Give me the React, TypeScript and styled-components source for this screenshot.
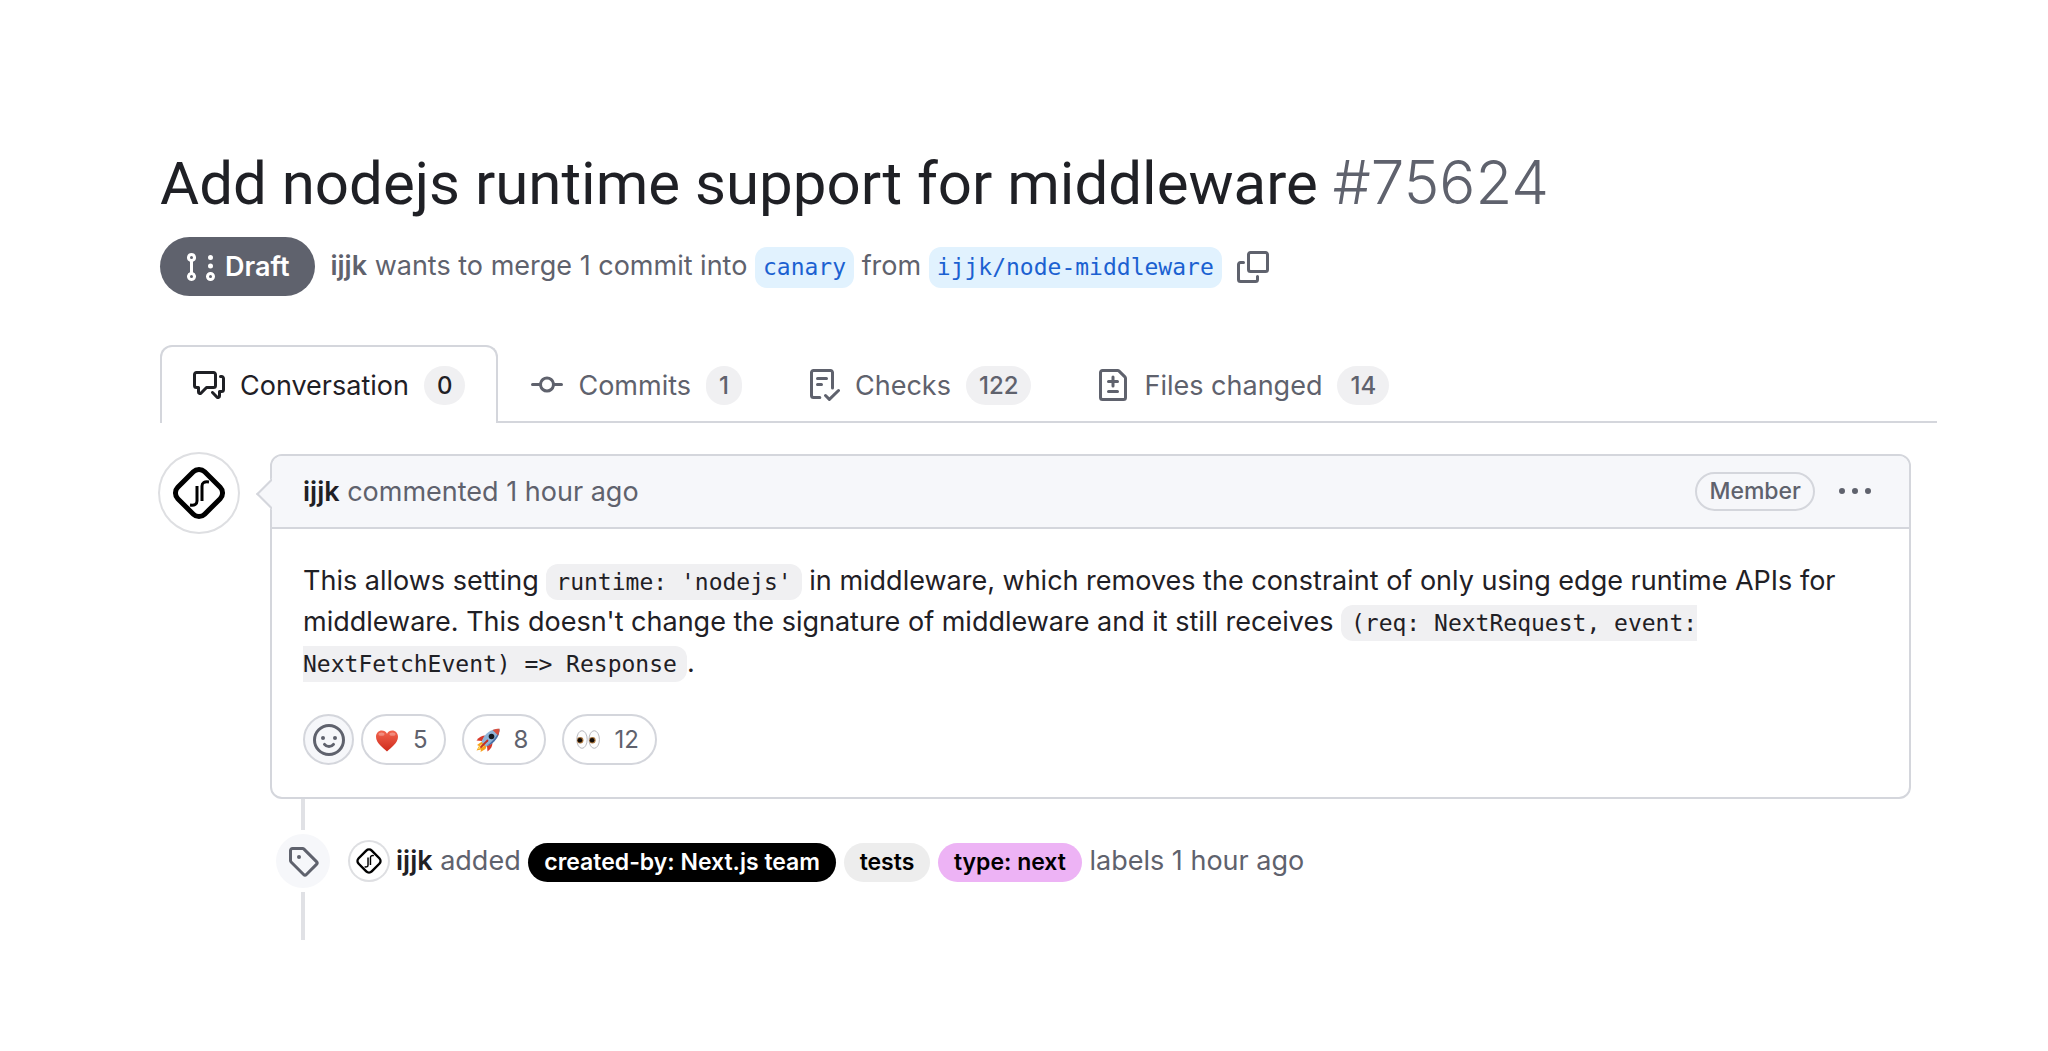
import type {ReactNode} from "react";
import styled, {createGlobalStyle} from "styled-components";

const theme = {
    colors: {
        text: "#1f2025",
        muted: "#5f626d",
        link: "#1b61d1",
        linkBg: "#e1f2fe",
        border: "#d4d6dc",
        subtle: "#f6f7fa",
        neutral: "#f0f0f2",
    },
    fonts: {
        sans: "Inter, 'Liberation Sans', sans-serif",
        title: "Roboto, 'Liberation Sans', sans-serif",
        mono: "'DejaVu Sans Mono', 'Liberation Mono', monospace",
    },
}

const icons = {
    draft: "M3.25 1A2.25 2.25 0 0 1 4 5.372v5.256a2.251 2.251 0 1 1-1.5 0V5.372A2.251 2.251 0 0 1 3.25 1Zm9.5 14a2.25 2.25 0 1 1 0-4.5 2.25 2.25 0 0 1 0 4.5ZM2.5 3.25a.75.75 0 1 0 1.5 0 .75.75 0 0 0-1.5 0ZM3.25 12a.75.75 0 1 0 0 1.5.75.75 0 0 0 0-1.5Zm9.5 0a.75.75 0 1 0 0 1.5.75.75 0 0 0 0-1.5ZM14 7.5a1.25 1.25 0 1 1-2.5 0 1.25 1.25 0 0 1 2.5 0Zm0-4.25a1.25 1.25 0 1 1-2.5 0 1.25 1.25 0 0 1 2.5 0Z",
    copy: "M0 6.75C0 5.784.784 5 1.75 5h1.5a.75.75 0 0 1 0 1.5h-1.5a.25.25 0 0 0-.25.25v7.5c0 .138.112.25.25.25h7.5a.25.25 0 0 0 .25-.25v-1.5a.75.75 0 0 1 1.5 0v1.5A1.75 1.75 0 0 1 9.25 16h-7.5A1.75 1.75 0 0 1 0 14.25ZM5 1.75C5 .784 5.784 0 6.75 0h7.5C15.216 0 16 .784 16 1.75v7.5A1.75 1.75 0 0 1 14.25 11h-7.5A1.75 1.75 0 0 1 5 9.25Zm1.75-.25a.25.25 0 0 0-.25.25v7.5c0 .138.112.25.25.25h7.5a.25.25 0 0 0 .25-.25v-7.5a.25.25 0 0 0-.25-.25Z",
    discussion: "M1.75 1h8.5c.966 0 1.75.784 1.75 1.75v5.5A1.75 1.75 0 0 1 10.25 10H7.061l-2.574 2.573A1.458 1.458 0 0 1 2 11.543V10h-.25A1.75 1.75 0 0 1 0 8.25v-5.5C0 1.784.784 1 1.75 1ZM1.5 2.75v5.5c0 .138.112.25.25.25h1a.75.75 0 0 1 .75.75v2.19l2.72-2.72a.749.749 0 0 1 .53-.22h3.5a.25.25 0 0 0 .25-.25v-5.5a.25.25 0 0 0-.25-.25h-8.5a.25.25 0 0 0-.25.25Zm13 2a.25.25 0 0 0-.25-.25h-.5a.75.75 0 0 1 0-1.5h.5c.966 0 1.75.784 1.75 1.75v5.5A1.75 1.75 0 0 1 14.25 12H14v1.543a1.458 1.458 0 0 1-2.487 1.03L9.22 12.28a.749.749 0 0 1 .326-1.275.749.749 0 0 1 .734.215l2.22 2.22v-2.19a.75.75 0 0 1 .75-.75h1a.25.25 0 0 0 .25-.25Z",
    commit: "M11.93 8.5a4.002 4.002 0 0 1-7.86 0H.75a.75.75 0 0 1 0-1.5h3.32a4.002 4.002 0 0 1 7.86 0h3.32a.75.75 0 0 1 0 1.5Zm-1.43-.75a2.5 2.5 0 1 0-5 0 2.5 2.5 0 0 0 5 0Z",
    checklist: "M2.5 1.75v11.5c0 .138.112.25.25.25h3.17a.75.75 0 0 1 0 1.5H2.75A1.75 1.75 0 0 1 1 13.25V1.75C1 .784 1.784 0 2.75 0h8.5C12.216 0 13 .784 13 1.75v7.736a.75.75 0 0 1-1.5 0V1.75a.25.25 0 0 0-.25-.25h-8.5a.25.25 0 0 0-.25.25Zm13.274 9.537v-.001l-4.557 4.45a.75.75 0 0 1-1.055-.008l-1.943-1.95a.75.75 0 0 1 1.062-1.058l1.419 1.425 4.026-3.932a.75.75 0 1 1 1.048 1.074ZM4.75 4h4.5a.75.75 0 0 1 0 1.5h-4.5a.75.75 0 0 1 0-1.5ZM4 7.75A.75.75 0 0 1 4.75 7h2a.75.75 0 0 1 0 1.5h-2A.75.75 0 0 1 4 7.75Z",
    diff: "M1 1.75C1 .784 1.784 0 2.75 0h7.586c.464 0 .909.184 1.237.513l2.914 2.914c.329.328.513.773.513 1.237v9.586A1.75 1.75 0 0 1 13.25 16H2.75A1.75 1.75 0 0 1 1 14.25Zm1.75-.25a.25.25 0 0 0-.25.25v12.5c0 .138.112.25.25.25h10.5a.25.25 0 0 0 .25-.25V4.664a.25.25 0 0 0-.073-.177l-2.914-2.914a.25.25 0 0 0-.177-.073ZM8 3.25a.75.75 0 0 1 .75.75v1.5h1.5a.75.75 0 0 1 0 1.5h-1.5v1.5a.75.75 0 0 1-1.5 0V7h-1.5a.75.75 0 0 1 0-1.5h1.5V4A.75.75 0 0 1 8 3.25Zm-3 8a.75.75 0 0 1 .75-.75h4.5a.75.75 0 0 1 0 1.5h-4.5a.75.75 0 0 1-.75-.75Z",
    kebab: "M8 9a1.5 1.5 0 1 0 0-3 1.5 1.5 0 0 0 0 3ZM1.5 9a1.5 1.5 0 1 0 0-3 1.5 1.5 0 0 0 0 3Zm13 0a1.5 1.5 0 1 0 0-3 1.5 1.5 0 0 0 0 3Z",
    tag: "M1 7.775V2.75C1 1.784 1.784 1 2.75 1h5.025c.464 0 .91.184 1.238.513l6.25 6.25a1.75 1.75 0 0 1 0 2.474l-5.026 5.026a1.75 1.75 0 0 1-2.474 0l-6.25-6.25A1.752 1.752 0 0 1 1 7.775Zm1.5 0c0 .066.026.13.073.177l6.25 6.25a.25.25 0 0 0 .354 0l5.025-5.025a.25.25 0 0 0 0-.354l-6.25-6.25a.25.25 0 0 0-.177-.073H2.75a.25.25 0 0 0-.25.25ZM6 5a1 1 0 1 1 0 2 1 1 0 0 1 0-2Z",
}

const Icon = ({name}: { name: keyof typeof icons }) => (
    <StyledIcon viewBox="0 0 16 16" aria-hidden="true">
        <path d={icons[name]} fill="currentColor"/>
    </StyledIcon>
)

const Smiley = () => (
    <StyledIcon viewBox="0 0 16 16" aria-hidden="true" fill="none" stroke="currentColor" strokeWidth="1.5">
        <circle cx="8" cy="8" r="7.25"/>
        <path d="M5.75 10.2c1.1 1.4 3.4 1.4 4.5 0" strokeLinecap="round"/>
        <circle cx="5" cy="7" r="1" fill="currentColor" stroke="none"/>
        <circle cx="11" cy="7" r="1" fill="currentColor" stroke="none"/>
    </StyledIcon>
)

const Logo = () => (
    <svg viewBox="0 0 78 78" width="100%" height="100%" aria-hidden="true" fill="none" stroke="#000">
        <rect x="20" y="20" width="38" height="38" rx="8" strokeWidth="5" transform="rotate(45 39 39)"/>
        <path d="M37 32v15q0 5-7 4" strokeWidth="3"/>
        <path d="M42 47V32q0-5 7-4" strokeWidth="3"/>
    </svg>
)

const Heart = () => (
    <svg viewBox="0 0 24 24" width="24" height="24" aria-hidden="true">
        <defs>
            <linearGradient id="heart" x1="0" y1="0" x2="0" y2="1">
                <stop offset="0" stopColor="#f2654f"/>
                <stop offset="1" stopColor="#cf2a1b"/>
            </linearGradient>
        </defs>
        <path d="M12 23.500C8 19.500 1 15 1 8.700 1 5.100 3.600 2.500 6.800 2.500 9 2.500 11 3.700 12 5.700 13 3.700 15 2.500 17.200 2.500 20.400 2.500 23 5.100 23 8.700 23 15 16 19.500 12 23.500Z" fill="url(#heart)"/>
        <ellipse cx="6.500" cy="6.200" rx="3" ry="1.600" fill="#fff" opacity=".3"/>
        <ellipse cx="17.500" cy="6.200" rx="3" ry="1.600" fill="#fff" opacity=".3"/>
    </svg>
)

const Rocket = () => (
    <svg viewBox="0 0 24 24" width="24" height="24" aria-hidden="true">
        <path d="M6 13.500 1 17l2 1-2.500 4.500L5 21.500 4.500 24l5-3 1.500-4Z" fill="#f7a21b"/>
        <path d="M5 16l-3.500 5.500L8 18.500Z" fill="#fde36b"/>
        <path d="M9.500 7.500C6 7.500 3 9 .5 12.500l5.500.5Z" fill="#d83a2b"/>
        <path d="M16.500 14.500c0 3.500-1.500 6.500-5 9L11 18Z" fill="#d83a2b"/>
        <path d="M23.500.8C17 .8 11.500 3.500 7.500 9.500L5.500 14l4.500 4.500 4.500-2C20.500 12.500 23.500 7 23.500.8Z" fill="#8fb4d8"/>
        <path d="M23.500.8C22 7 18 12.500 10 18.500l4.500-2C20.500 12.500 23.500 7 23.500.8Z" fill="#4a6fa5"/>
        <path d="M23.500.8c-2.500 0-4.800.4-7 1.300l5.700 5.500c.9-2.200 1.300-4.400 1.300-6.800Z" fill="#d9503f"/>
        <circle cx="15.500" cy="8.500" r="2.800" fill="#15181f"/>
        <path d="M11.500 12.500 5 19" stroke="#c22f24" strokeWidth="1.800" strokeLinecap="round"/>
    </svg>
)

const Eyes = () => (
    <svg viewBox="0 0 24 24" width="24" height="24" aria-hidden="true">
        <ellipse cx="6" cy="11.500" rx="5.200" ry="8.800" fill="#fdfdfd" stroke="#b9b9bf" strokeWidth="1"/>
        <ellipse cx="18.200" cy="11.500" rx="5.200" ry="8.800" fill="#fdfdfd" stroke="#b9b9bf" strokeWidth="1"/>
        <circle cx="4.200" cy="12.200" r="3.200" fill="#a9743c"/>
        <circle cx="16.400" cy="12.200" r="3.200" fill="#a9743c"/>
        <circle cx="3.900" cy="12.200" r="2.300" fill="#120c08"/>
        <circle cx="16.100" cy="12.200" r="2.300" fill="#120c08"/>
    </svg>
)

const tabs: { icon: keyof typeof icons, title: string, count: number }[] = [
    {icon: "discussion", title: "Conversation", count: 0},
    {icon: "commit", title: "Commits", count: 1},
    {icon: "checklist", title: "Checks", count: 122},
    {icon: "diff", title: "Files changed", count: 14},
]

const reactions: { name: string, icon: ReactNode, count: number }[] = [
    {name: "heart", icon: <Heart/>, count: 5},
    {name: "rocket", icon: <Rocket/>, count: 8},
    {name: "eyes", icon: <Eyes/>, count: 12},
]

const App = () => {
    return (
        <Page>
            <GlobalStyle/>
            <header>
                <Title>Add nodejs runtime support for middleware <span>#75624</span></Title>
                <Meta>
                    <State><Icon name="draft"/>Draft</State>
                    <MetaText>
                        <Author href="#ijjk" $muted>ijjk</Author> wants to merge 1 commit into{" "}
                        <Branch href="#canary">canary</Branch> from{" "}
                        <Branch href="#node-middleware">ijjk/node-middleware</Branch>
                    </MetaText>
                    <IconButton type="button" aria-label="Copy"><Icon name="copy"/></IconButton>
                </Meta>
            </header>

            <Tabs>
                {tabs.map((t, index) => (
                    <Tab key={t.title} href={"#" + t.icon} $active={index === 0}>
                        <Icon name={t.icon}/>
                        {t.title}
                        <Counter>{t.count}</Counter>
                    </Tab>
                ))}
            </Tabs>

            <Thread>
                <Avatar href="#ijjk" aria-label="ijjk" $size={78}><Logo/></Avatar>
                <div>
                    <Comment>
                        <CommentHeader>
                            <div><Author href="#ijjk">ijjk</Author> commented 1 hour ago</div>
                            <Actions>
                                <Role>Member</Role>
                                <IconButton type="button" aria-label="Show options"><Icon name="kebab"/></IconButton>
                            </Actions>
                        </CommentHeader>
                        <CommentBody>
                            <Text>
                                This allows setting <Code>runtime: 'nodejs'</Code> in middleware, which removes the
                                constraint of only using edge runtime APIs for middleware. This doesn't change the
                                signature of middleware and it still
                                receives <Code>(req: NextRequest, event: NextFetchEvent) =&gt; Response</Code>.
                            </Text>
                            <Reactions>
                                <AddReaction type="button" aria-label="Add reaction"><Smiley/></AddReaction>
                                {reactions.map(r => (
                                    <Reaction key={r.name} type="button" aria-label={r.name}>
                                        {r.icon}
                                        <span>{r.count}</span>
                                    </Reaction>
                                ))}
                            </Reactions>
                        </CommentBody>
                    </Comment>

                    <Event>
                        <Rail>
                            <Line $height={31}/>
                            <Badge><Icon name="tag"/></Badge>
                            <Line $height={48}/>
                        </Rail>
                        <EventText>
                            <Avatar href="#ijjk" aria-label="ijjk" $size={38}><Logo/></Avatar>
                            <p>
                                <Author href="#ijjk">ijjk</Author> added{" "}
                                <Label href="#nextjs" $bg="#000" $color="#fff">created-by: Next.js team</Label>{" "}
                                <Label href="#tests" $bg="#ededed" $color="#000">tests</Label>{" "}
                                <Label href="#next" $bg="#edb3f5" $color="#000">type: next</Label> labels 1 hour ago
                            </p>
                        </EventText>
                    </Event>
                </div>
            </Thread>
        </Page>
    );
};

export default App;

const GlobalStyle = createGlobalStyle`
    * {
        box-sizing: border-box;
    }

    body {
        margin: 0;
        background-color: #fff;
        color: ${theme.colors.text};
        font-family: ${theme.fonts.sans};
        font-size: 27px;
        line-height: 41px;
    }

    p, h1 {
        margin: 0;
    }

    a {
        color: inherit;
        text-decoration: none;
    }

    button {
        font: inherit;
        color: inherit;
        cursor: pointer;
    }
`

const Page = styled.main`
    padding: 145px 111px 100px 160px;
`

const StyledIcon = styled.svg`
    width: 32px;
    height: 32px;
    flex-shrink: 0;
`

const Title = styled.h1`
    font-family: ${theme.fonts.title};
    font-size: 60px;
    line-height: 78px;
    font-weight: 400;

    span {
        font-family: ${theme.fonts.sans};
        font-weight: 300;
        line-height: 1;
        color: ${theme.colors.muted};
    }
`

const Meta = styled.div`
    display: flex;
    align-items: center;
    gap: 15px;
    margin-top: 14px;
    color: ${theme.colors.muted};
`

const State = styled.span`
    display: flex;
    align-items: center;
    gap: 8px;
    padding: 9px 26px 9px 25px;
    border-radius: 30px;
    background-color: ${theme.colors.muted};
    color: #fff;
    font-weight: 600;
`

const MetaText = styled.div`
    color: ${theme.colors.muted};
`

const Author = styled.a<{ $muted?: boolean }>`
    font-weight: 600;
    color: ${props => props.$muted ? theme.colors.muted : theme.colors.text};
`

const Branch = styled.a`
    display: inline-block;
    padding: 0 8px;
    border-radius: 12px;
    background-color: ${theme.colors.linkBg};
    color: ${theme.colors.link};
    font-family: ${theme.fonts.mono};
    font-size: 23px;
`

const IconButton = styled.button`
    display: flex;
    padding: 0;
    border: none;
    background: none;
    color: ${theme.colors.muted};
`

const Tabs = styled.nav`
    display: flex;
    margin-top: 49px;
    box-shadow: inset 0 -2px ${theme.colors.border};
`

const Tab = styled.a<{ $active: boolean }>`
    display: flex;
    align-items: center;
    gap: 15px;
    height: 78px;
    padding: 0 31px;
    border: 2px solid ${props => props.$active ? theme.colors.border : "transparent"};
    border-bottom: none;
    border-radius: 12px 12px 0 0;
    background-color: ${props => props.$active ? "#fff" : "transparent"};
    color: ${props => props.$active ? theme.colors.text : theme.colors.muted};
`

const Counter = styled.span`
    padding: 0 13px;
    border-radius: 20px;
    background-color: ${theme.colors.neutral};
    font-size: 24px;
    line-height: 39px;
    font-weight: 500;
`

const Thread = styled.section`
    display: grid;
    grid-template-columns: 78px 1fr;
    gap: 32px;
    align-items: start;
    margin-top: 31px;
    padding-right: 26px;
`

const Avatar = styled.a<{ $size: number }>`
    display: block;
    flex-shrink: 0;
    width: ${props => props.$size}px;
    height: ${props => props.$size}px;
    border-radius: 50%;
    box-shadow: 0 0 0 2px #dedfe2;
`

const Comment = styled.article`
    position: relative;
    border: 2px solid ${theme.colors.border};
    border-radius: 12px;

    /* arrow that points at the avatar */
    &::before {
        content: "";
        position: absolute;
        top: 26px;
        left: -11px;
        width: 22px;
        height: 22px;
        border: 2px solid ${theme.colors.border};
        border-width: 0 0 2px 2px;
        background-color: ${theme.colors.subtle};
        transform: rotate(45deg);
    }
`

const CommentHeader = styled.div`
    position: relative;
    display: flex;
    align-items: center;
    justify-content: space-between;
    padding: 15px 38px 15px 31px;
    border-bottom: 2px solid ${theme.colors.border};
    border-radius: 10px 10px 0 0;
    background-color: ${theme.colors.subtle};
    color: ${theme.colors.muted};
`

const Actions = styled.div`
    display: flex;
    align-items: center;
    gap: 24px;
`

const Role = styled.span`
    padding: 0 12px;
    border: 2px solid ${theme.colors.border};
    border-radius: 20px;
    font-size: 23px;
    line-height: 35px;
    font-weight: 500;
`

const CommentBody = styled.div`
    padding: 31px 31px 32px;
`

const Text = styled.p`
    margin-bottom: 31px;
`

const Code = styled.code`
    padding: 5px 10px;
    border-radius: 12px;
    background-color: ${theme.colors.neutral};
    font-family: ${theme.fonts.mono};
    font-size: 23px;
    line-height: 1;
`

const Reactions = styled.div`
    display: flex;
    gap: 16px;
`

const Reaction = styled.button`
    display: flex;
    align-items: center;
    gap: 14px;
    height: 51px;
    padding: 0 16px 0 12px;
    border: 2px solid ${theme.colors.border};
    border-radius: 26px;
    background-color: #fff;
    color: ${theme.colors.muted};
    font-size: 24px;
`

const AddReaction = styled.button`
    display: flex;
    align-items: center;
    justify-content: center;
    width: 51px;
    height: 51px;
    margin-right: -9px;
    padding: 0;
    border: 2px solid ${theme.colors.border};
    border-radius: 50%;
    background-color: ${theme.colors.subtle};
    color: ${theme.colors.muted};
`

const Event = styled.div`
    display: flex;
    align-items: flex-start;
    gap: 14px;
`

const Rail = styled.div`
    display: flex;
    flex-direction: column;
    align-items: center;
    gap: 4px;
    width: 66px;
`

const Line = styled.div<{ $height: number }>`
    width: 4px;
    height: ${props => props.$height}px;
    background-color: #e0e1e5;
`

const Badge = styled.div`
    display: flex;
    align-items: center;
    justify-content: center;
    width: 54px;
    height: 54px;
    border-radius: 50%;
    background-color: ${theme.colors.subtle};
    color: ${theme.colors.muted};
`

const EventText = styled.div`
    display: flex;
    align-items: center;
    gap: 8px;
    padding-top: 41px;
    color: ${theme.colors.muted};
`

const Label = styled.a<{ $bg: string, $color: string }>`
    display: inline-block;
    padding: 0 16px;
    border-radius: 20px;
    background-color: ${props => props.$bg};
    color: ${props => props.$color};
    font-size: 23px;
    line-height: 39px;
    font-weight: 600;
    vertical-align: middle;
`
